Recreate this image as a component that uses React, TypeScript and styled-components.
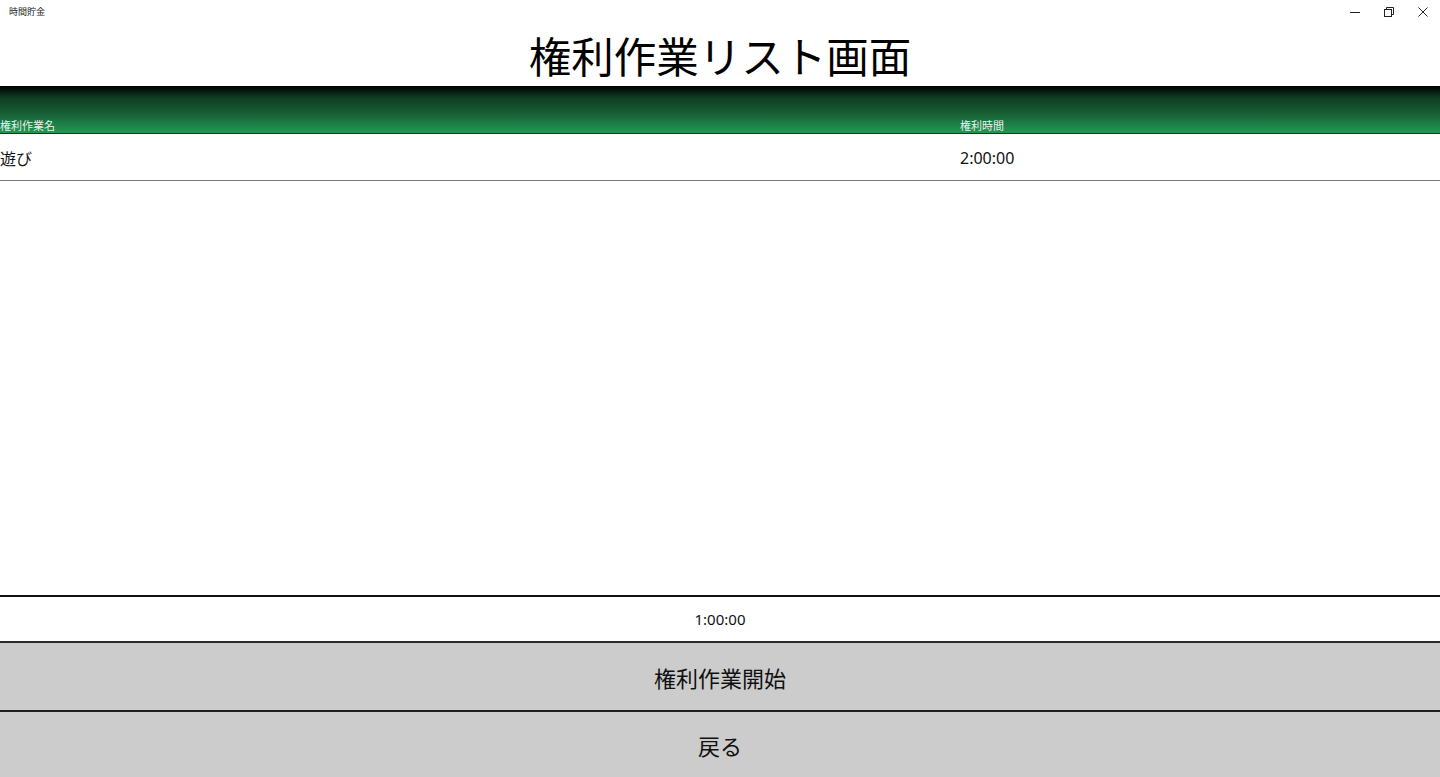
import React from "react";
import styled, { createGlobalStyle } from "styled-components";

const Global = createGlobalStyle`
  html, body { margin: 0; padding: 0; background: #fff; }
  body { font-family: "Noto Sans", "Noto Sans CJK JP", sans-serif; color: #000; }
  *, *::before, *::after { box-sizing: border-box; }
`;

const Window = styled.div`
  width: 1440px;
  height: 777px;
  display: flex;
  flex-direction: column;
  overflow: hidden;
  background: #fff;
`;

const TitleBar = styled.div`
  height: 23px;
  display: flex;
  align-items: center;
  justify-content: space-between;
  padding-left: 9px;
  flex-shrink: 0;
`;

const AppName = styled.span`
  font-size: 9px;
  color: #222;
  font-family: "Noto Sans CJK JP", sans-serif;
`;

const Controls = styled.div`
  display: flex;
  height: 23px;
`;

const ControlButton = styled.div`
  width: 34px;
  height: 23px;
  display: flex;
  align-items: center;
  justify-content: center;
`;

const Heading = styled.h1`
  margin: 0;
  height: 63px;
  display: flex;
  align-items: center;
  justify-content: center;
  font-family: "Noto Sans CJK JP", sans-serif;
  font-weight: 400;
  font-size: 42.5px;
  flex-shrink: 0;
`;

const Grid = styled.div`
  display: grid;
  grid-template-columns: 960px 1fr;
`;

const HeaderRow = styled(Grid)`
  height: 48px;
  align-items: end;
  background: linear-gradient(to bottom, #000 0%, #0f3d22 25%, #175a33 55%, #1f8b4c 90%, #22984f 100%);
  border-bottom: 1px solid #0e3b20;
  flex-shrink: 0;
`;

const HeaderCell = styled.div`
  font-family: "Noto Sans CJK JP", sans-serif;
  font-size: 11px;
  color: #e8f2ea;
  line-height: 14px;
  padding-bottom: 1px;
`;

const DataRow = styled(Grid)`
  height: 47px;
  align-items: center;
  border-bottom: 1px solid #7a7a7a;
  flex-shrink: 0;
`;

const DataCell = styled.div`
  font-family: "Noto Sans", "Noto Sans CJK JP", sans-serif;
  font-size: 16px;
  color: #111;
  padding-top: 2px;
`;

const ListSpace = styled.div`
  flex: 1;
`;

const Timer = styled.div`
  height: 48px;
  border-top: 2px solid #111;
  border-bottom: 2px solid #2b2b2b;
  display: flex;
  align-items: center;
  justify-content: center;
  font-family: "Noto Sans", sans-serif;
  font-size: 15px;
  color: #111;
  flex-shrink: 0;
`;

const ActionButton = styled.button<{ $last?: boolean }>`
  height: ${(p) => (p.$last ? "65px" : "69px")};
  border: none;
  border-bottom: ${(p) => (p.$last ? "none" : "2px solid #1e1e1e")};
  background: #cccccc;
  font-family: "Noto Sans CJK JP", sans-serif;
  font-size: 22px;
  color: #111;
  display: flex;
  align-items: center;
  justify-content: center;
  padding: 0;
  flex-shrink: 0;
`;

export default function App() {
  return (
    <Window>
      <Global />
      <TitleBar>
        <AppName>時間貯金</AppName>
        <Controls>
          <ControlButton>
            <svg width="10" height="10" viewBox="0 0 10 10">
              <path d="M0 5.5h10" stroke="#222" strokeWidth="1" />
            </svg>
          </ControlButton>
          <ControlButton>
            <svg width="10" height="10" viewBox="0 0 10 10" fill="none" stroke="#222" strokeWidth="1">
              <rect x="0.5" y="2.5" width="7" height="7" />
              <path d="M2.5 2.5V0.5h7v7h-2" />
            </svg>
          </ControlButton>
          <ControlButton>
            <svg width="10" height="10" viewBox="0 0 10 10">
              <path d="M0.5 0.5l9 9M9.5 0.5l-9 9" stroke="#222" strokeWidth="1" />
            </svg>
          </ControlButton>
        </Controls>
      </TitleBar>
      <Heading>権利作業リスト画面</Heading>
      <HeaderRow>
        <HeaderCell>権利作業名</HeaderCell>
        <HeaderCell>権利時間</HeaderCell>
      </HeaderRow>
      <DataRow>
        <DataCell>遊び</DataCell>
        <DataCell>2:00:00</DataCell>
      </DataRow>
      <ListSpace />
      <Timer>1:00:00</Timer>
      <ActionButton>権利作業開始</ActionButton>
      <ActionButton $last>戻る</ActionButton>
    </Window>
  );
}
